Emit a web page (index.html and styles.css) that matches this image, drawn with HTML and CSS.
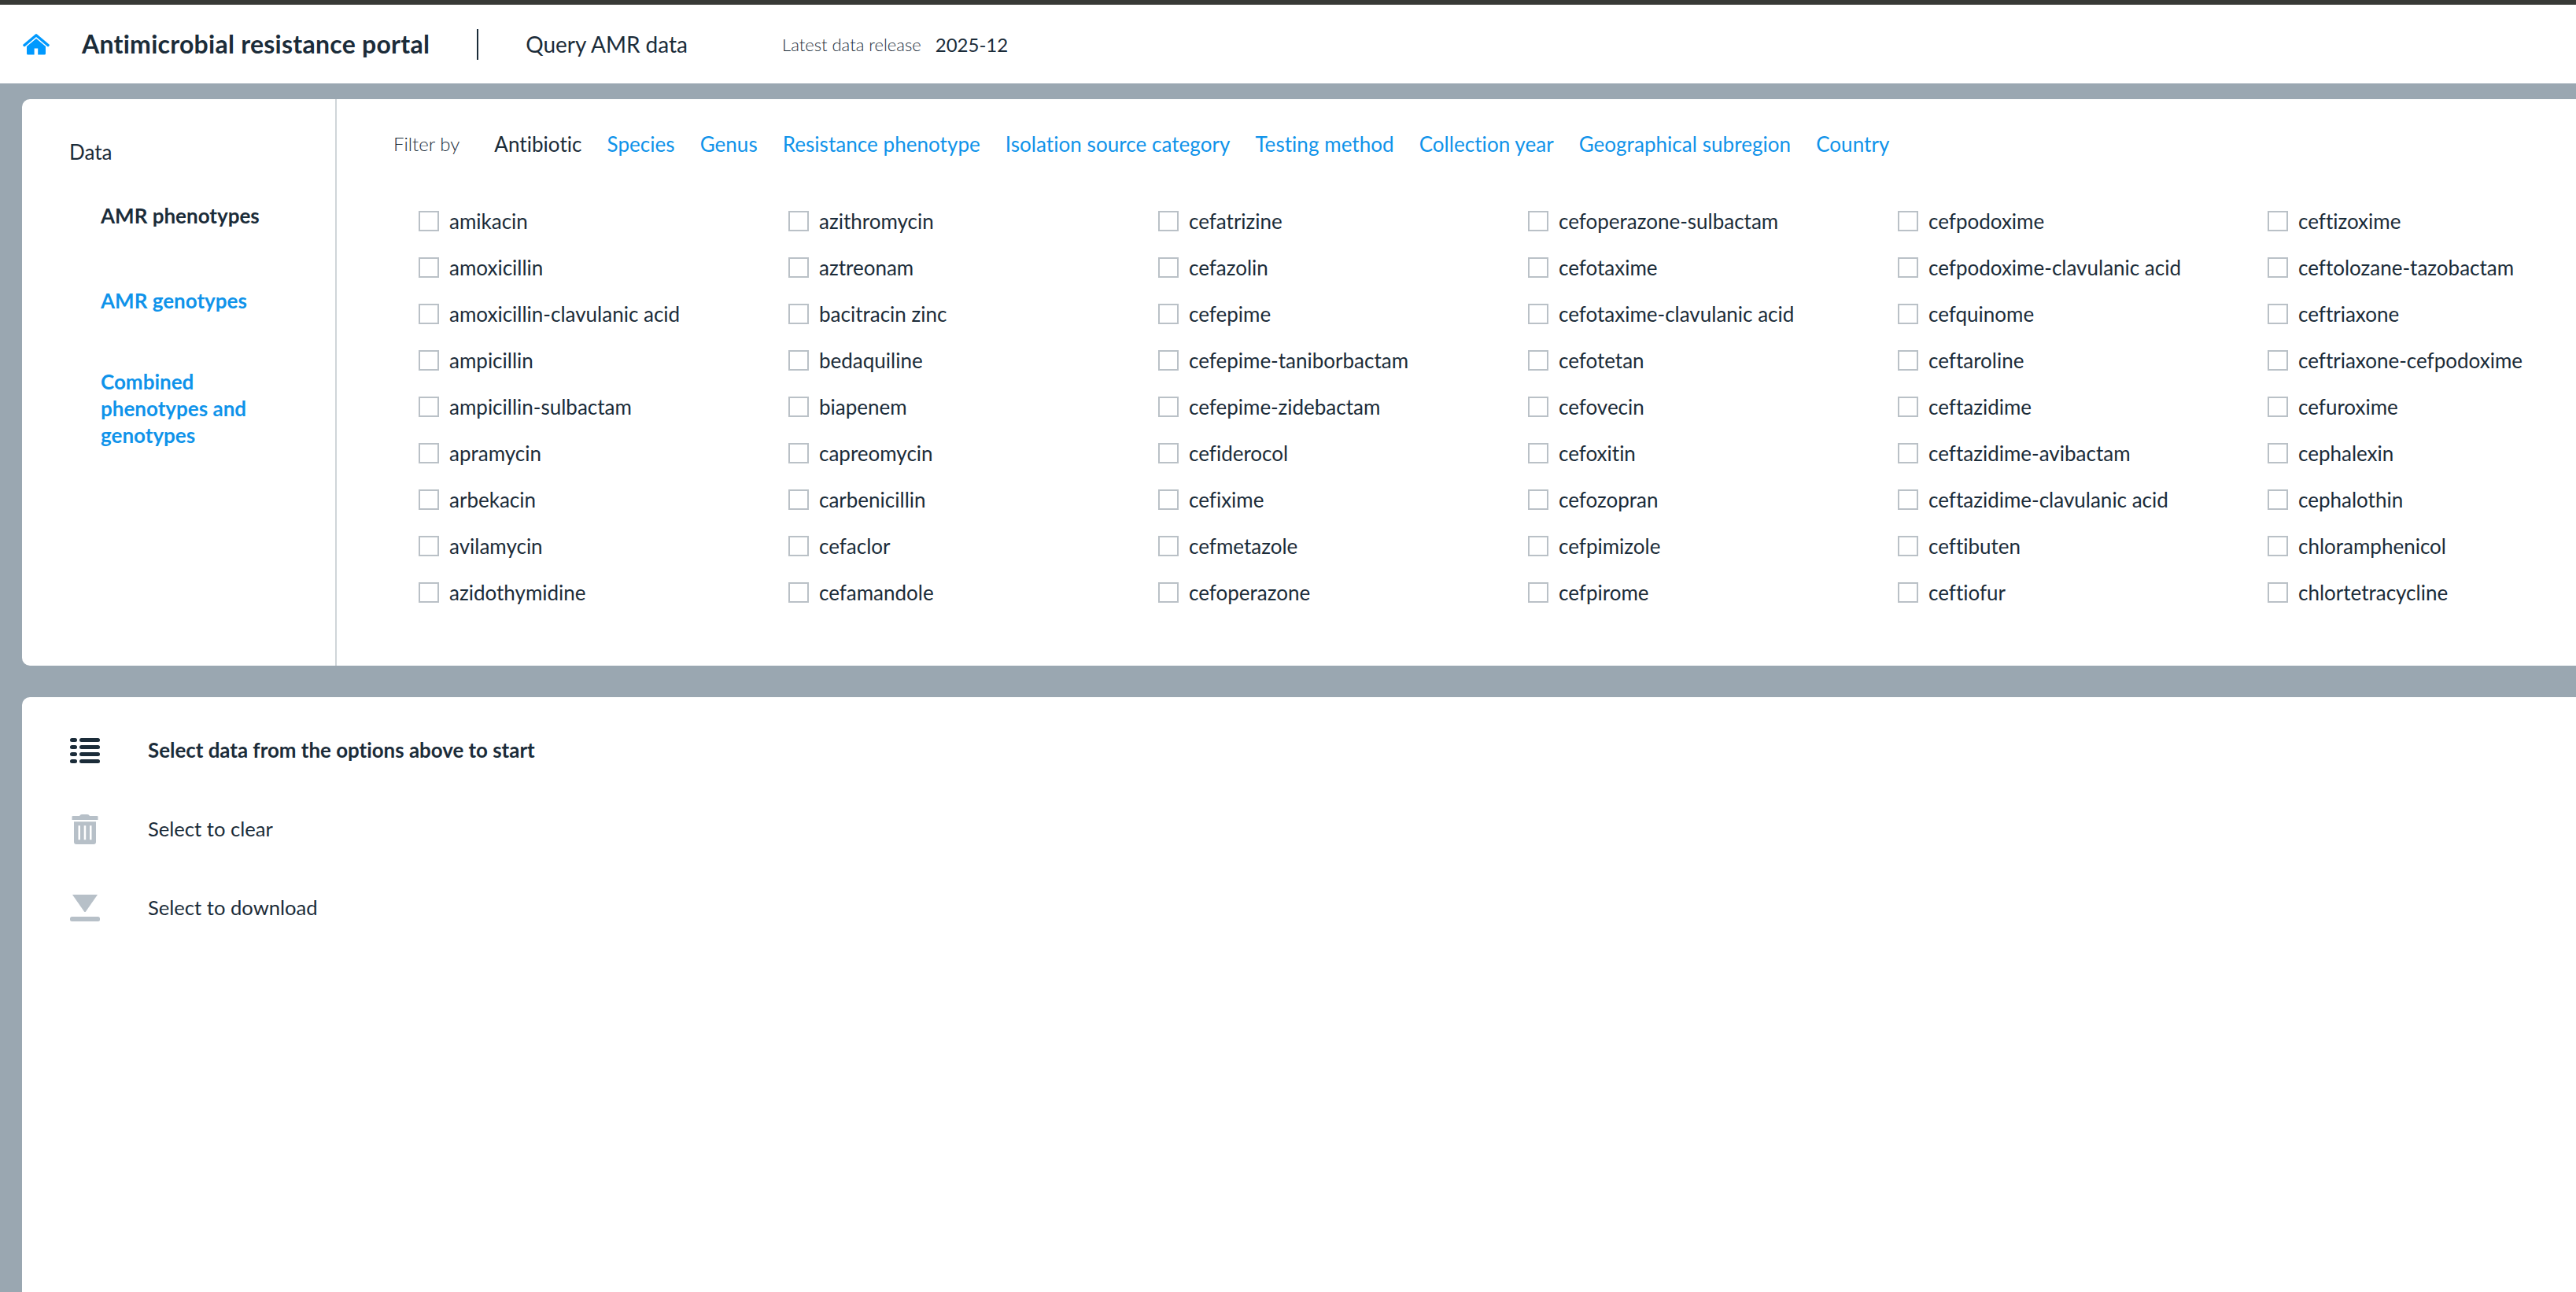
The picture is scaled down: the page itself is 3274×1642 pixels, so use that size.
FILE: index.html
```html
<!DOCTYPE html>
<html lang="en">
<head>
  <meta charset="UTF-8">
  <title>Antimicrobial resistance portal</title>
  <meta name="viewport" content="width=device-width, initial-scale=1">
  <link rel="stylesheet" href="styles.css">
</head>
<body>
  <header class="top-bar">
    <a class="home" href="#" aria-label="Home">
      <svg viewBox="0 0 34 27" width="34" height="27">
        <path d="M0.5 13.5 16 0.5Q17 -0.3 18 0.5L33.5 13.5Q34.3 14.3 33.6 15L32.8 15.9Q32 16.6 31.2 15.9L17 4 2.8 15.9Q2 16.6 1.2 15.9L0.4 15Q-0.3 14.3 0.5 13.5Z" />
        <path d="M17 6 29 16V25Q29 26.5 27.5 26.5H19.2V18.5H14.6V26.5H6.5Q5 26.5 5 25V16Z" />
      </svg>
    </a>
    <h1 class="title">Antimicrobial resistance portal</h1>
    <span class="page-name">Query AMR data</span>
    <span class="release-label">Latest data release</span>
    <span class="release">2025-12</span>
  </header>

  <main>
    <section class="panel filters">
      <nav class="sidebar">
        <h2 class="sidebar-title">Data</h2>
        <ul class="views">
          <li class="active">AMR phenotypes</li>
          <li>AMR genotypes</li>
          <li>Combined phenotypes and genotypes</li>
        </ul>
      </nav>

      <div class="filter-area">
        <div class="tabs">
          <span class="tabs-label">Filter by</span>
          <a class="tab active">Antibiotic</a>
          <a class="tab">Species</a>
          <a class="tab">Genus</a>
          <a class="tab">Resistance phenotype</a>
          <a class="tab">Isolation source category</a>
          <a class="tab">Testing method</a>
          <a class="tab">Collection year</a>
          <a class="tab">Geographical subregion</a>
          <a class="tab">Country</a>
        </div>
        <div class="options" id="options"></div>
      </div>
    </section>

    <section class="panel results">
      <div class="action active">
        <svg viewBox="0 0 38 38" width="38" height="38">
          <rect x="0" y="3" width="9" height="5" rx="2.5" /><rect x="12" y="3" width="26" height="5" rx="2.5" />
          <rect x="0" y="12" width="9" height="5" rx="2.5" /><rect x="12" y="12" width="26" height="5" rx="2.5" />
          <rect x="0" y="21" width="9" height="5" rx="2.5" /><rect x="12" y="21" width="26" height="5" rx="2.5" />
          <rect x="0" y="30" width="9" height="5" rx="2.5" /><rect x="12" y="30" width="26" height="5" rx="2.5" />
        </svg>
        <span>Select data from the options above to start</span>
      </div>
      <div class="action">
        <svg viewBox="0 0 38 38" width="38" height="38">
          <path d="M2.5 3Q2.5 2 3.5 2H12Q13 0 15 0H22Q24 0 25 2H34.5Q35.5 2 35.5 3V7H2.5Z" />
          <path fill-rule="evenodd" d="M5 9.3H33V35Q33 38 30 38H8Q5 38 5 35ZM10.5 14.3V32.3H13V14.3ZM17.7 14.3V32.3H20.2V14.3ZM25 14.3V32.3H27.5V14.3Z" />
        </svg>
        <span>Select to clear</span>
      </div>
      <div class="action">
        <svg viewBox="0 0 38 38" width="38" height="38">
          <path d="M3 2H35L20 23.5Q19 24.5 18 23.5Z" />
          <rect x="0" y="30" width="38" height="6" rx="2.5" />
        </svg>
        <span>Select to download</span>
      </div>
    </section>
  </main>

  <script>
    const antibiotics = [
      'amikacin', 'amoxicillin', 'amoxicillin-clavulanic acid', 'ampicillin', 'ampicillin-sulbactam', 'apramycin', 'arbekacin', 'avilamycin', 'azidothymidine',
      'azithromycin', 'aztreonam', 'bacitracin zinc', 'bedaquiline', 'biapenem', 'capreomycin', 'carbenicillin', 'cefaclor', 'cefamandole',
      'cefatrizine', 'cefazolin', 'cefepime', 'cefepime-taniborbactam', 'cefepime-zidebactam', 'cefiderocol', 'cefixime', 'cefmetazole', 'cefoperazone',
      'cefoperazone-sulbactam', 'cefotaxime', 'cefotaxime-clavulanic acid', 'cefotetan', 'cefovecin', 'cefoxitin', 'cefozopran', 'cefpimizole', 'cefpirome',
      'cefpodoxime', 'cefpodoxime-clavulanic acid', 'cefquinome', 'ceftaroline', 'ceftazidime', 'ceftazidime-avibactam', 'ceftazidime-clavulanic acid', 'ceftibuten', 'ceftiofur',
      'ceftizoxime', 'ceftolozane-tazobactam', 'ceftriaxone', 'ceftriaxone-cefpodoxime', 'cefuroxime', 'cephalexin', 'cephalothin', 'chloramphenicol', 'chlortetracycline'
    ];

    document.getElementById('options').innerHTML = antibiotics.map(name =>
      `<label class="option"><input type="checkbox">${name}</label>`
    ).join('');
  </script>
</body>
</html>
```
FILE: styles.css
```css
* {
  box-sizing: border-box;
}
body {
  margin: 0;
  height: 1642px;
  overflow: hidden;
  display: flex;
  flex-direction: column;
  font-family: Lato, sans-serif;
  font-size: 26px;
  line-height: 34px;
  font-variant-ligatures: none;
  color: #1b2c39;
  background: #9aa7b1;
}
.top-bar {
  height: 106px;
  border-top: 6px solid #383a36;
  padding-left: 29px;
  display: flex;
  align-items: center;
  background: #fff;
  white-space: nowrap;
}
.home {
  display: flex;
  margin-right: 41px;
  fill: #0099ff;
}
.title {
  margin: 0;
  font-size: 32px;
  font-weight: bold;
  letter-spacing: 0.26px;
}
.page-name {
  margin-left: 60px;
  padding-left: 60px;
  border-left: 2px solid #1b2c39;
  font-size: 28px;
  line-height: 39px;
}
.release-label {
  margin-left: 120px;
  padding-top: 2px;
  font-size: 22px;
  font-weight: 300;
}
.release {
  margin-left: 18px;
  padding-top: 1px;
  font-size: 24px;
}
main {
  flex: 1;
  padding: 20px 0 0 28px;
  display: flex;
  flex-direction: column;
  gap: 40px;
}
.panel {
  background: #fff;
}
.filters {
  height: 720px;
  display: flex;
  border-radius: 10px 0 0 10px;
}
.sidebar {
  flex: none;
  width: 400px;
  padding: 50px 60px;
  border-right: 2px solid #d0d5d9;
}
.sidebar-title {
  margin: 0 0 42px;
  font-size: 26px;
  font-weight: normal;
}
.views {
  margin: 0 0 0 40px;
  padding: 0;
  width: 220px;
  display: flex;
  flex-direction: column;
  gap: 64px;
  list-style: none;
  font-weight: bold;
  color: #0f93ea;
}
.views li {
  min-height: 44px;
  display: flex;
  align-items: center;
}
.active,
.views .active {
  color: #1b2c39;
}
.filter-area {
  padding: 40px 0 0 72px;
}
.tabs {
  display: flex;
  gap: 32px;
  white-space: nowrap;
}
.tabs-label {
  margin-right: 12px;
  font-size: 24px;
  font-weight: 300;
}
.tab {
  letter-spacing: 0.05px;
  color: #0f93ea;
}
.tab.active {
  color: #1b2c39;
}
.options {
  margin: 51px 0 0 32px;
  display: grid;
  grid-template-rows: repeat(9, 59px);
  grid-auto-columns: 470px;
  grid-auto-flow: column;
}
.option {
  display: flex;
  align-items: center;
  white-space: nowrap;
}
.option input {
  appearance: none;
  width: 26px;
  height: 26px;
  margin: 0 13px 0 0;
  border: 2px solid #bac1c7;
}
.results {
  flex: 1;
  padding: 50px 0 0 61px;
  border-radius: 10px 0 0 0;
  font-size: 25.6px;
}
.action {
  height: 100px;
  display: flex;
  align-items: flex-start;
  gap: 61px;
}
.action svg {
  margin-top: -1px;
  fill: #b7c0c8;
}
.action.active {
  font-size: 25.9px;
  font-weight: bold;
}
.action.active svg {
  fill: #1b2c39;
}
```
